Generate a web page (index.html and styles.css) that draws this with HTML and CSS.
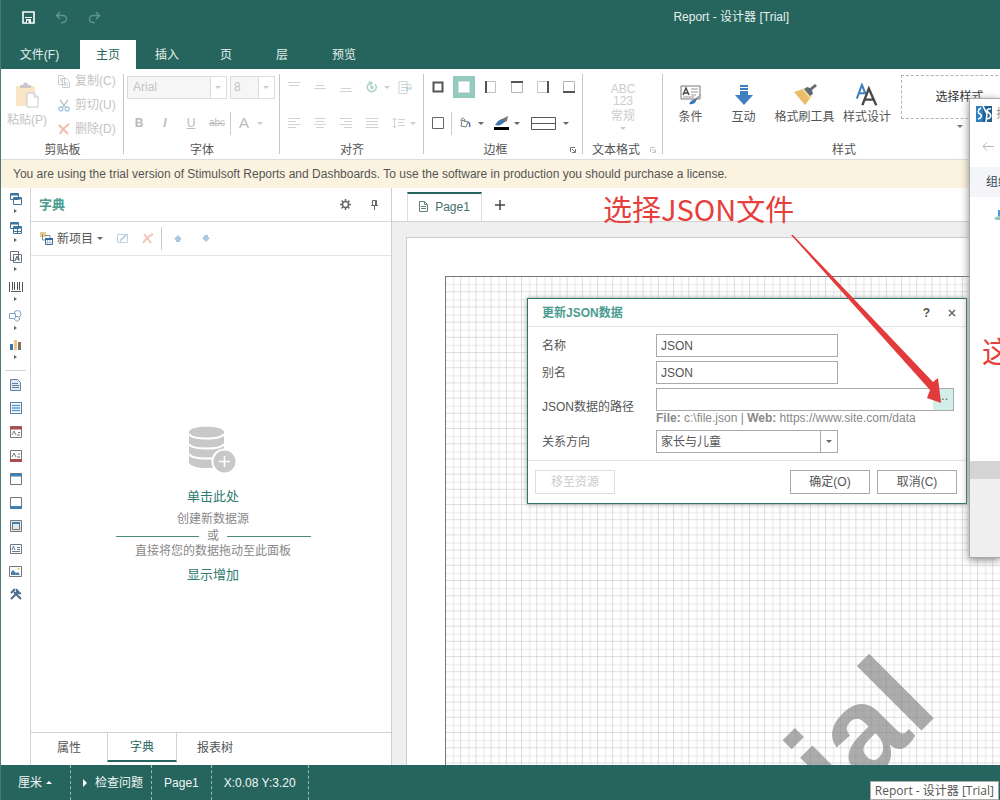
FILE: index.html
```html
<!DOCTYPE html>
<html lang="zh-CN">
<head>
<meta charset="utf-8">
<title>Report - 设计器 [Trial]</title>
<link rel="stylesheet" href="styles.css">
</head>
<body>
<div class="app">
  <header class="titlebar">
    <div class="quick">
      <button aria-label="保存"><svg width="13" height="13" viewBox="0 0 13 13"><path d="M1 1h11v11H1z" fill="none" stroke="#fff" stroke-width="1.6"/><path d="M3 6h7v1H3zM4 8h5v4H4z" fill="#fff"/><path d="M5 9.500h1.500V12H5z" fill="#25655d"/></svg></button>
      <button aria-label="撤销"><svg width="13" height="13" viewBox="0 0 13 13" fill="none" stroke="#5f938c" stroke-width="1.500"><path d="M5 1L1.500 4.500 5 8M2 4.500h6a3.500 3.500 0 0 1 0 7H6"/></svg></button>
      <button aria-label="重做"><svg width="13" height="13" viewBox="0 0 13 13" fill="none" stroke="#5f938c" stroke-width="1.500"><path d="M8 1l3.500 3.500L8 8M11 4.500H5a3.500 3.500 0 0 0 0 7h2"/></svg></button>
    </div>
    <h1 class="title">Report - 设计器 [Trial]</h1>
  </header>
  <nav class="tabs">
    <button class="tab tab-file">文件(F)</button>
    <button class="tab tab-active">主页</button>
    <button class="tab tab-mid">插入</button>
    <button class="tab">页</button>
    <button class="tab">层</button>
    <button class="tab tab-wide">预览</button>
  </nav>

  <section class="ribbon">
    <div class="group g-clip">
      <div class="group-body clip">
        <button class="paste" disabled>
          <svg width="24" height="26" viewBox="0 0 24 26"><path d="M1 4h19v20H1z" fill="#f8e6c6"/><path d="M5 3h3a2.500 2.500 0 0 1 5 0h3v3H5z" fill="#c9c9c9"/><path d="M12 11h7l4 4v10H12z" fill="#fff" stroke="#c8c8c8"/><path d="M19 11v4h4" fill="none" stroke="#c8c8c8"/></svg>
          粘贴(P)</button>
        <div class="clip-list">
          <button disabled><svg width="12" height="13" viewBox="0 0 12 13" fill="#fff" stroke="#c4ccd0"><path d="M.5 .5h4l2 2v7h-6zM4.500 3.500h4l3 3v6h-7z"/><path d="M6 8h4M6 10h4M2 4h2M2 6h2"/></svg>复制(C)</button>
          <button disabled><svg width="12" height="13" viewBox="0 0 12 13" fill="none"><path d="M2 1l6 8M10 1L4 9" stroke="#bcc4c8" stroke-width="1.300"/><circle cx="2.800" cy="10" r="2" stroke="#a5c8e4" stroke-width="1.300"/><circle cx="9.200" cy="10" r="2" stroke="#a5c8e4" stroke-width="1.300"/></svg>剪切(U)</button>
          <button disabled><svg width="12" height="12" viewBox="0 0 12 12" fill="none" stroke="#f5b9b0" stroke-width="2"><path d="M1 2l9 9M11 1C7 4 4 7 2 11"/></svg>删除(D)</button>
        </div>
      </div>
      <div class="group-label">剪贴板</div>
    </div>

    <div class="group g-font">
      <div class="group-body">
        <div class="row">
          <div class="combo combo-font"><input aria-label="字体" value="Arial" disabled><i class="caret"></i></div>
          <div class="combo combo-size"><input aria-label="字号" value="8" disabled><i class="caret"></i></div>
        </div>
        <div class="row faint">
          <button class="cell" disabled><b>B</b></button>
          <button class="cell" disabled><b><i>I</i></b></button>
          <button class="cell" disabled><u>U</u></button>
          <button class="cell tiny" disabled><s>abc</s></button>
          <span class="vline"></span>
          <button class="cell letter" disabled>A</button><i class="caret"></i>
        </div>
      </div>
      <div class="group-label">字体</div>
    </div>

    <div class="group g-align">
      <div class="group-body">
        <div class="row">
          <button class="cell" aria-label="顶端" disabled><svg width="12" height="12" stroke="#d2d2d2"><path d="M0 1.500h12M1 4.500h10"/></svg></button>
          <button class="cell" aria-label="居中" disabled><svg width="12" height="12" stroke="#d2d2d2"><path d="M2 4.500h8M0 7.500h12"/></svg></button>
          <button class="cell" aria-label="底端" disabled><svg width="12" height="12" stroke="#d2d2d2"><path d="M1 7.500h10M0 10.500h12"/></svg></button>
          <button class="cell" aria-label="旋转" disabled><svg width="12" height="12" viewBox="0 0 12 12" fill="none" stroke="#a9d3cc" stroke-width="1.500"><path d="M4 2a4.500 4.500 0 1 0 5 1M3 .5l3 1.500-2 3"/><circle cx="6" cy="6.500" r="1"/></svg></button><i class="caret near"></i>
          <button class="cell" aria-label="换行" disabled><svg width="14" height="13" viewBox="0 0 14 13" fill="none" stroke="#cfd4d4"><path d="M1 .5h8v12H1zM3 3.500h10M3 6.500h8M3 9.500h4"/><path d="M13 5v3H8M10 6L8 8l2 2" stroke="#a9c9dc"/></svg></button>
        </div>
        <div class="row">
          <button class="cell" aria-label="左对齐" disabled><svg width="12" height="12" stroke="#d2d2d2"><path d="M0 1.500h12M0 4.500h8M0 7.500h12M0 10.500h8"/></svg></button>
          <button class="cell" aria-label="居中对齐" disabled><svg width="12" height="12" stroke="#d2d2d2"><path d="M0 1.500h12M2 4.500h8M0 7.500h12M2 10.500h8"/></svg></button>
          <button class="cell" aria-label="右对齐" disabled><svg width="12" height="12" stroke="#d2d2d2"><path d="M0 1.500h12M4 4.500h8M0 7.500h12M4 10.500h8"/></svg></button>
          <button class="cell" aria-label="两端对齐" disabled><svg width="12" height="12" stroke="#d2d2d2"><path d="M0 1.500h12M0 4.500h12M0 7.500h12M0 10.500h12"/></svg></button>
          <button class="cell" aria-label="行距" disabled><svg width="13" height="12" fill="none" stroke="#cfd4d4"><path d="M2.500 1v10M.5 3l2-2 2 2M.5 9l2 2 2-2M6 2.500h7M6 5.500h6M6 8.500h7"/></svg></button><i class="caret near"></i>
        </div>
      </div>
      <div class="group-label">对齐</div>
    </div>

    <div class="group g-border">
      <div class="group-body">
        <div class="row">
          <button class="cell" aria-label="全部"><svg width="12" height="12"><path d="M1.500 1.500h9v9h-9z" fill="none" stroke="#555" stroke-width="2"/></svg></button>
          <button class="cell selected" aria-label="无"><svg width="12" height="12"><path d="M.5 .5h11v11h-11z" fill="#fff" stroke="#d5dfdc"/></svg></button>
          <button class="cell" aria-label="左"><svg width="12" height="12"><path d="M.5 .5h10v11H.5z" fill="none" stroke="#c4c4c4"/><path d="M1 0v12" stroke="#555" stroke-width="2"/></svg></button>
          <button class="cell" aria-label="上"><svg width="12" height="12"><path d="M.5 .5h11v11H.5z" fill="none" stroke="#b4b4b4"/><path d="M0 1h12" stroke="#555" stroke-width="2"/></svg></button>
          <button class="cell" aria-label="右"><svg width="12" height="12"><path d="M.5 .5h11v11H.5z" fill="none" stroke="#c4c4c4"/><path d="M11 0v12" stroke="#555" stroke-width="2"/></svg></button>
          <button class="cell" aria-label="下"><svg width="12" height="12"><path d="M.5 .5h11v11H.5z" fill="none" stroke="#b4b4b4"/><path d="M0 11h12" stroke="#555" stroke-width="2"/></svg></button>
        </div>
        <div class="row dark">
          <button class="cell" aria-label="外框"><svg width="12" height="12"><path d="M.5 .5h11v11h-11z" fill="none" stroke="#666"/></svg></button>
          <span class="vline"></span>
          <button class="cell" aria-label="填充"><svg width="13" height="12" viewBox="0 0 13 12" fill="none" stroke="#777"><path d="M3 3l6 2-2 5-5-1zM2 4c0-4 4-4 4 1"/><path d="M9 5c2 1 2 3 1.500 5" stroke="#4b7ba6" stroke-width="1.500"/></svg></button><i class="caret near"></i>
          <button class="cell" aria-label="边框颜色"><svg width="15" height="14" viewBox="0 0 15 14"><path d="M14 0L6 4l3 3 4-2z" fill="#777"/><path d="M8 3L4 5 1 9c4 1 7 0 9-3z" fill="#3d77ac"/><path d="M0 11h15v3H0z" fill="#000"/></svg></button><i class="caret near"></i>
          <button class="cell line-style" aria-label="线型"><svg width="25" height="13" fill="none" stroke="#555"><path d="M.5 .5h24v12H.5zM0 6.500h25"/></svg></button><i class="caret"></i>
        </div>
      </div>
      <div class="group-label label-border">边框<svg class="launch" width="6" height="6" fill="none" stroke="#777"><path d="M.5 5V.5H5M2 2l3 3M5.500 2v3.500H2"/></svg></div>
    </div>

    <div class="group g-text">
      <div class="group-body format">
        <button disabled><span>ABC</span><span>123</span><em>常规</em><i class="caret"></i></button>
      </div>
      <div class="group-label label-format">文本格式<svg class="launch pale" width="6" height="6" fill="none" stroke="#777"><path d="M.5 5V.5H5M2 2l3 3M5.500 2v3.500H2"/></svg></div>
    </div>

    <div class="group g-style">
      <div class="group-body styles">
        <button class="big"><svg width="24" height="24" viewBox="0 0 24 24" fill="none"><path d="M2 3h19v13H2z" fill="#fff" stroke="#777"/><path d="M4 12L7 5l3 7M5 10h4" stroke="#444" stroke-width="1.400"/><path d="M12 6h7M12 9h7M12 12h5M4 14h11" stroke="#999"/><path d="M22 11l-7 6 1.500 1.500z" fill="#777"/><path d="M16 16l-4 2-2 3c4 1 6-1 7-3z" fill="#3b79b8"/></svg>条件</button>
        <button class="big"><svg width="24" height="24" viewBox="0 0 24 24" fill="#3f7fbd"><path d="M8 2h8v2H8zM8 5h8v2H8zM8 8h8v4h5l-9 10-9-10h5z"/></svg>互动</button>
        <button class="big"><svg width="24" height="24" viewBox="0 0 24 24"><path d="M1 9l9-3 8 8-6 8z" fill="#e9bc69"/><path d="M10 5l9 9-2 2L9 7z" fill="#f3d79c"/><path d="M11 6l3-2 3 1 5-4 2 2-5 4 1 4-3 2z" fill="#626b73"/></svg>格式刷工具</button>
        <button class="big"><svg width="24" height="24" viewBox="0 0 24 26" fill="none"><path d="M1 17L6.500 2l4 10M3 11h6" stroke="#3f7fbd" stroke-width="2.200"/><path d="M7 24l7-18 8 18M9 18h10" stroke="#484848" stroke-width="2.600"/></svg>样式设计</button>
        <div class="picker"><button class="style-box">选择样式</button><i class="caret"></i></div>
      </div>
      <div class="group-label">样式</div>
    </div>
  </section>

  <div class="notice">You are using the trial version of Stimulsoft Reports and Dashboards. To use the software in production you should purchase a license.</div>

  <main class="main">
    <aside class="toolbox">
      <div class="tools-top">
        <button aria-label="带区"><svg width="12" height="12" viewBox="0 0 12 12" fill="#fff" stroke="#3f749c"><path d="M.5 .5h8v6h-8zM3.500 4.500h8v7h-8z"/><path d="M1 1.500h7M4 5.500h7" stroke-width="2"/></svg><i class="side"></i></button>
        <button aria-label="交叉带区"><svg width="12" height="12" viewBox="0 0 12 12" fill="#fff" stroke="#3f749c"><path d="M.5 .5h8v6h-8zM3.500 4.500h8v7h-8z"/><path d="M1 1.500h7M4 5.500h7" stroke-width="2"/><path d="M7.500 6v6M4 9.500h7"/></svg><i class="side"></i></button>
        <button aria-label="组件"><svg width="12" height="12" viewBox="0 0 12 12" fill="#fff" stroke="#657383"><path d="M.5 .5h8v9h-8zM3.500 3.500h8v8h-8z"/><path d="M5 10l2-5 2 5M5 8h5"/></svg><i class="side"></i></button>
        <button aria-label="条形码"><svg width="14" height="12" viewBox="0 0 14 12" stroke="#555"><path d="M.5 1v10M3.500 1v8M5.500 1v8M8.500 1v8M10.500 1v8M13.500 1v10M2 10.500h10"/></svg><i class="side"></i></button>
        <button aria-label="形状"><svg width="13" height="12" viewBox="0 0 13 12" fill="#fff" stroke="#7ba3cb"><circle cx="8.500" cy="4" r="3.500"/><path d="M.5 3.500h6v5h-6z"/><path d="M8 6l3 3-3 2.500L5 9z"/></svg><i class="side"></i></button>
        <button aria-label="图表"><svg width="12" height="12" viewBox="0 0 12 12"><path d="M0 5h3v6H0z" fill="#3975a9"/><path d="M4 1h3v10H4z" fill="#e7c58c"/><path d="M8 3h3v8H8z" fill="#807063"/></svg><i class="side"></i></button>
      </div>
      <div class="tools-list">
        <button aria-label="文本"><svg width="11" height="12" viewBox="0 0 11 12" fill="#dce8f3" stroke="#64809d"><path d="M.5 .5h7l3 3v8H.5z"/><path d="M2 4.500h6M2 6.500h7M2 8.500h7"/></svg></button>
        <button aria-label="数据带"><svg width="12" height="12" fill="#fff" stroke="#537ca3"><path d="M.5 .5h11v11H.5z"/><path d="M2 3.500h8M2 6h8M2 8.500h8" stroke="#629bd0" stroke-width="1.500"/></svg></button>
        <button aria-label="页头"><svg width="12" height="12" fill="#fff" stroke="#777"><path d="M.5 .5h11v11H.5z"/><path d="M0 2h12" stroke="#a64f4d" stroke-width="3"/><path d="M2 9l2-4 2 4M8 6.500h2M7 9h3"/></svg></button>
        <button aria-label="页脚"><svg width="12" height="12" fill="#fff" stroke="#777"><path d="M.5 .5h11v11H.5z"/><path d="M0 10.500h12" stroke="#a64f4d" stroke-width="3"/><path d="M2 7l2-4 2 4M8 4h2M7 7h3"/></svg></button>
        <button aria-label="标题"><svg width="12" height="12" fill="#fff" stroke="#777"><path d="M.5 .5h11v11H.5z"/><path d="M0 2h12" stroke="#427eb0" stroke-width="3"/></svg></button>
        <button aria-label="汇总"><svg width="12" height="12" fill="#fff" stroke="#777"><path d="M.5 .5h11v11H.5z"/><path d="M0 10.500h12" stroke="#427eb0" stroke-width="3"/></svg></button>
        <button aria-label="面板"><svg width="12" height="12" fill="#dfe8ee" stroke="#777"><path d="M.5 .5h11v11H.5zM2.500 3.500h7v6h-7z"/><path d="M2 3h8" stroke="#427eb0" stroke-width="2"/></svg></button>
        <button aria-label="富文本"><svg width="12" height="10" fill="#fff" stroke="#667a90"><path d="M.5 .5h11v9H.5z"/><path d="M2 6l1.500-4L5 6M7 3.500h3M7 5.500h3M2 7.500h8"/></svg></button>
        <button aria-label="图像"><svg width="13" height="11" fill="#fff" stroke="#777"><path d="M.5 .5h12v10H.5z"/><path d="M2 9V6l2-2 3 3 2-1 2 3z" fill="#4c81ad" stroke="none"/><circle cx="9.500" cy="3" r="1" fill="#e6bb65" stroke="none"/></svg></button>
        <button aria-label="设置"><svg width="12" height="12" viewBox="0 0 12 12" fill="none" stroke="#4d6c8b"><path d="M1 11l8-8M4 4l7 7" stroke-width="2"/><path d="M1 5l4-4M7 1c-1 3 1 5 4 4" stroke-width="2"/></svg></button>
      </div>
    </aside>

    <section class="dictionary">
      <header class="dict-head"><h2>字典</h2>
        <button aria-label="设置"><svg width="11" height="11" viewBox="0 0 11 11" fill="none" stroke="#666"><circle cx="5.500" cy="5.500" r="3" stroke-width="1.500"/><path d="M5.500 0v2M5.500 9v2M0 5.500h2M9 5.500h2M1.600 1.600L3 3M8 8l1.400 1.400M1.600 9.400L3 8M8 3l1.400-1.400" stroke-width="1.500"/></svg></button>
        <button aria-label="固定"><svg width="7" height="10" viewBox="0 0 7 10" fill="none" stroke="#666"><path d="M1.500 5V.5h4V5M0 5.500h7M3.500 6v4M4.500 1v4"/></svg></button>
      </header>
      <div class="dict-tools">
        <button class="new-item"><svg width="13" height="13" viewBox="0 0 13 13"><path d="M0 0h6v5H0z" fill="#edcb8d"/><path d="M2.500 2v6H5M5 3.500h5v4" fill="none" stroke="#7c8a96"/><path d="M5.500 6.500h7v6h-7z" fill="#fff" stroke="#426f95"/><path d="M5 7h8" stroke="#356b9b" stroke-width="2"/><path d="M7.500 8v4M10 8v4M6 10.500h6" stroke="#b3c8da"/></svg>新项目<i class="caret dark"></i></button>
        <button aria-label="编辑" disabled><svg width="11" height="11" fill="none" stroke="#bed2e1"><path d="M.5 1.500h10v8H.5z"/><path d="M3 8l7-7" stroke-width="2"/></svg></button>
        <button aria-label="删除" disabled><svg width="12" height="11" fill="none" stroke="#f2c5bb" stroke-width="2"><path d="M2 1l7 9M11 1C7 3 3 7 1 10"/></svg></button>
        <span class="vline"></span>
        <button aria-label="上移" disabled><svg width="8" height="8" fill="#aac8df"><path d="M4 0l4 4-2 1v2H2V5L0 4z"/></svg></button>
        <button aria-label="下移" disabled><svg width="8" height="8" fill="#aac8df"><path d="M4 7L0 3l2-1V0h4v2l2 1z"/></svg></button>
      </div>
      <div class="empty">
        <svg width="48" height="48" viewBox="0 0 48 48" fill="#c8c8c8"><path d="M0 6C0-1 35-1 35 6v30c0 8-35 8-35 0z"/><path d="M0 8c3 6 32 6 35 0M0 18c3 6 32 6 35 0M0 28c3 6 32 6 35 0" fill="none" stroke="#fff" stroke-width="2"/><circle cx="35.500" cy="35.500" r="12" stroke="#fff" stroke-width="2"/><path d="M35.500 30v11M30 35.500h11" stroke="#fff" stroke-width="1.500"/></svg>
        <a href="#new">单击此处</a>
        <p>创建新数据源</p>
        <p class="or">或</p>
        <p>直接将您的数据拖动至此面板</p>
        <a class="show" href="#show">显示增加</a>
      </div>
      <nav class="dict-tabs"><button>属性</button><button class="on">字典</button><button>报表树</button></nav>
    </section>

    <section class="designer">
      <nav class="page-tabs">
        <button class="page-tab"><svg width="9" height="11" fill="none" stroke="#66827e"><path d="M.5 .5h5l3 3v7h-8zM5.500 .5v3h3M2 5.500h5M2 7.500h5"/></svg>Page1</button>
        <button class="add" aria-label="新页"><svg width="10" height="10" stroke="#444" stroke-width="1.500"><path d="M5 0v10M0 5h10"/></svg></button>
      </nav>
      <div class="canvas"><div class="page">
        <svg class="sheet" width="100%" height="100%">
          <defs><pattern id="grid" width="15.200" height="15.200" patternUnits="userSpaceOnUse"><path d="M7.600 0v15.200M0 7.600h15.200" stroke="#e6e6e6"/><path d="M15.200 0v15.200M0 15.200h15.200" stroke="#bdbdbd"/></pattern></defs>
          <rect width="100%" height="100%" fill="url(#grid)"/>
          <text class="watermark" text-anchor="end" transform="translate(494 435) rotate(-45)">Trial</text>
        </svg>
      </div></div>
    </section>
  </main>

  <footer class="status">
    <button>厘米<i class="up"></i></button>
    <button><i class="play"></i>检查问题</button>
    <span>Page1</span>
    <span>X:0.08 Y:3.20</span>
  </footer>

  <form class="dialog" role="dialog" aria-labelledby="dlg-title">
    <header><h2 id="dlg-title">更新JSON数据</h2><button type="button">?</button><button type="button" aria-label="关闭"><svg width="8" height="8" stroke="#666" stroke-width="1.500"><path d="M1 1l6 6M7 1L1 7"/></svg></button></header>
    <div class="fields">
      <label for="name">名称</label><input id="name" class="short" value="JSON">
      <label for="alias">别名</label><input id="alias" class="short" value="JSON">
      <label for="path">JSON数据的路径</label>
      <div class="path"><div class="path-box"><input id="path"><button type="button">...</button></div><small><b>File:</b> c:\file.json | <b>Web:</b> https://www.site.com/data</small></div>
      <label for="relation">关系方向</label>
      <div class="select short"><select id="relation"><option>家长与儿童</option></select><span><i class="caret"></i></span></div>
    </div>
    <footer><button type="button" disabled>移至资源</button><button type="button" class="ok">确定(O)</button><button type="button">取消(C)</button></footer>
  </form>

  <svg class="arrow" width="152" height="170" viewBox="0 0 152 170"><path d="M0 0L2 0L142 147l5-4 3 25-14-5 3-8z" fill="#e33b3b"/></svg>
  <div class="note">选择JSON文件</div>

  <aside class="window">
    <div class="win-title"><svg width="16" height="16" viewBox="0 0 16 16"><path d="M0 0h7v16H0z" fill="#2d80c2"/><path d="M7 0h9v16H7z" fill="#1f5f92"/><path d="M5 2C1 4 2 7 4 8s2 4-2 5M7 0l4 8-1 8M15 3c-4-1-5 2-2 4s2 6-3 6" fill="none" stroke="#fff" stroke-width="1.600"/></svg><span>打开</span></div>
    <div class="win-nav"><svg width="12" height="9" fill="none" stroke="#b5b5b5"><path d="M12 4.500H1M5 .5l-4 4 4 4"/></svg></div>
    <div class="win-bar">组织</div>
    <div class="win-body"><svg width="10" height="14"><path d="M4 1h6v6H4z" fill="#4c9bdd"/><path d="M0 9l5-2 5 1v3H2z" fill="#8bc7c3"/></svg><b>这</b></div>
    <div class="win-scroll"></div>
    <div class="win-foot"></div>
  </aside>
  <div class="tooltip">Report - 设计器 [Trial]</div>
</div>
</body>
</html>
```
FILE: styles.css
```css
* { box-sizing: border-box; }
body { margin: 0; font: 12px/16px "Liberation Sans", "Noto Sans CJK SC", sans-serif; color: #555; }
button { border: 0; background: none; padding: 0; margin: 0; font: inherit; color: inherit; display: flex; align-items: center; justify-content: center; }
h1, h2, p { margin: 0; font: inherit; }
svg { display: block; flex: none; }
i.caret { flex: none; width: 0; height: 0; border: 3px solid transparent; border-top-color: #ccc; border-bottom: 0; }
.vline { width: 1px; height: 23px; background: #ccc; flex: none; }

.app { position: relative; height: 100vh; display: flex; flex-direction: column; overflow: hidden; background: #fff; border-left: 1px solid #4d7a78; }
.titlebar { flex: none; height: 40px; background: #25655d; display: flex; align-items: center; padding: 0 211px 6px 21px; }
.quick { display: flex; gap: 20px; flex: 1; }
.title { color: #e8f0ee; }
.tabs { flex: none; background: #25655d; height: 29px; display: flex; color: #e8f0ee; }
.tab { width: 56px; }
.tab-file { width: 79px; padding-right: 2px; }
.tab-active { background: #fff; color: #25655d; }
.tab-mid { width: 62px; }
.tab-wide { width: 68px; }

.ribbon { flex: none; height: 90px; display: flex; overflow: hidden; }
.group { flex: none; display: flex; flex-direction: column; position: relative; }
.group::after { content: ""; position: absolute; right: 0; top: 5px; bottom: 5px; width: 1px; background: #c6c6c6; }
.group-body { height: 72px; }
.group-label { height: 18px; line-height: 18px; text-align: center; position: relative; }
.launch { position: absolute; right: 7px; top: 6px; }
.pale { opacity: .4; }
.g-clip { width: 123px; }
.g-font { width: 156px; }
.g-align { width: 144px; }
.g-border { width: 159px; }
.label-border { padding-right: 16px; }
.g-text { width: 80px; }
.label-format { padding-right: 14px; }
.g-style { width: 362px; }
.clip { display: flex; color: #c3c3c3; }
.clip button { color: #c3c3c3; }
.paste { width: 52px; flex-direction: column; gap: 4px; }
.clip-list { display: flex; flex-direction: column; padding-left: 5px; }
.clip-list button { height: 24px; gap: 5px; }
.row { display: flex; align-items: center; height: 36px; padding-left: 1px; }
.cell { width: 26px; height: 24px; flex: none; }
.g-font .row { padding-left: 2px; }
.faint .cell { color: #bbb; }
.tiny { font-size: 10px; }
.letter { font-size: 15px; }
.combo { display: flex; align-items: center; justify-content: space-between; border: 1px solid #ddd; height: 23px; padding-right: 5px; margin-left: 1px; }
.combo input { border: 0; border-right: 1px solid #ddd; background: #f6f6f6; color: #c3c3c3; font: inherit; height: 21px; padding: 0 5px; min-width: 0; }
.combo-font { width: 100px; }
.combo-font input { width: 83px; }
.combo-size { width: 45px; margin-left: 3px; }
.combo-size input { width: 28px; padding: 0 3px; }
.near { margin: 0 2px 0 -1px; }
.selected { background: #95cabf; width: 22px; margin: 0 3px 0 2px; height: 22px; }
.dark .caret, i.dark { border-top-color: #666; }
.dark .near { margin: 0 4px 0 0; }
.dark .line-style { width: 32px; margin-left: 3px; margin-right: 4px; }
.format { display: flex; justify-content: center; }
.format button { flex-direction: column; color: #ccc; line-height: 12px; padding-top: 2px; }
.format em { font-style: normal; line-height: 16px; padding: 1px 0 3px; }
.styles { display: flex; padding-left: 1px; }
.big { flex-direction: column; width: 53px; gap: 2px; white-space: nowrap; padding-bottom: 2px; }
.big:nth-child(3) { width: 69px; }
.big:nth-child(4) { width: 56px; }
.picker { display: flex; flex-direction: column; align-items: center; padding-top: 6px; gap: 6px; margin-left: 6px; }
.style-box { width: 117px; height: 44px; border: 1px dashed #b5b5b5; color: #333; }
.picker .caret { border-top-color: #777; }
.notice { flex: none; height: 29px; line-height: 29px; padding-left: 12px; background: #fbf3df; border-top: 1px solid #ddd; white-space: nowrap; }

.main { flex: 1; min-height: 0; display: flex; }
.toolbox { flex: none; width: 30px; border-right: 1px solid #d2d2d2; }
.toolbox button { width: 100%; }
.tools-top { height: 183px; padding-bottom: 6px; border-bottom: 1px solid #d2d2d2; display: flex; flex-direction: column; justify-content: space-around; margin: 0 4px; }
.tools-top button { flex-direction: column; gap: 4px; }
.side { width: 0; height: 0; border: 2px solid transparent; border-left: 3px solid #666; border-right: 0; }
.tools-list { height: 235px; padding-top: 2px; display: flex; flex-direction: column; justify-content: space-around; }

.dictionary { flex: none; width: 361px; border-right: 1px solid #cfcfcf; display: flex; flex-direction: column; }
.dict-head { height: 34px; flex: none; border-bottom: 1px solid #d8d8d8; display: flex; align-items: center; gap: 20px; padding: 0 13px 0 8px; }
.dict-head h2 { flex: 1; font-weight: bold; font-size: 13px; color: #4a9c8f; }
.dict-tools { height: 34px; flex: none; border-bottom: 1px solid #e4e4e4; display: flex; align-items: center; padding-left: 9px; gap: 14px; }
.new-item { gap: 4px; }
.dict-tools .vline { margin: 0 -7px; }
.dict-tools .vline + button { margin: 0 6px 0 5px; }
.empty { flex: 1; display: flex; flex-direction: column; align-items: center; padding-top: 170px; padding-left: 4px; color: #888; }
.empty a { color: #2f7a6d; font-size: 13px; line-height: 18px; text-decoration: none; margin-top: 14px; }
.empty p { line-height: 15px; }
.empty a + p { margin-top: 6px; }
.empty .or { display: flex; align-items: center; gap: 8px; width: 195px; line-height: 17px; margin-top: 1px; }
.or::before, .or::after { content: ""; flex: 1; height: 1px; background: #4b8c81; }
.empty p.or + p { margin-top: -1px; }
.empty .show { margin-top: 7px; }
.dict-tabs { flex: none; height: 33px; border-top: 1px solid #d2d2d2; display: flex; }
.dict-tabs button { width: 76px; height: 29px; }
.dict-tabs .on { width: 70px; color: #25655d; border: 1px solid #d2d2d2; border-top: 0; border-bottom: 2px solid #25655d; }

.designer { flex: 1; min-width: 0; display: flex; flex-direction: column; }
.page-tabs { flex: none; height: 34px; border-bottom: 1px solid #d2d2d2; display: flex; padding: 4px 0 0 15px; }
.page-tab { width: 75px; gap: 7px; border: 1px solid #ddd; border-top: 2px solid #25655d; border-bottom: 0; color: #46716b; padding-bottom: 2px; }
.add { width: 36px; padding-bottom: 4px; }
.canvas { flex: 1; min-height: 0; background: #efefef; padding: 15px 0 0 14px; }
.page { height: 100%; background: #fff; border: 1px solid #ccc; border-width: 1px 0 0 1px; padding: 38px 0 0 38px; }
.sheet { border: 1px solid #777; border-width: 1px 0 0 1px; }
.watermark { font-family: "Liberation Sans", Arial, sans-serif; font-size: 126px; font-weight: bold; fill: #808080; fill-opacity: .65; }

.status { flex: none; height: 35px; background: #25655d; color: #f2f7f6; display: flex; }
.status > * { display: flex; align-items: center; gap: 6px; padding: 0 12px; border-right: 1px dashed #9bbcb7; }
.status > :first-child { padding: 0 18px 0 17px; gap: 4px; }
.status > :nth-child(2) { padding: 0 8px 0 12px; gap: 8px; }
.up { border: 3px solid transparent; border-bottom-color: #fff; border-top: 0; }
.play { border: 4px solid transparent; border-left-color: #fff; border-right: 0; }

.dialog { position: absolute; left: 526px; top: 298px; width: 440px; background: #fff; border: 1px solid #2c7568; box-shadow: 0 0 5px #999; }
.dialog > header { height: 28px; display: flex; align-items: center; gap: 18px; padding: 0 10px 0 14px; border-bottom: 1px solid #e2e2e2; }
.dialog h2 { flex: 1; font-weight: bold; font-size: 12px; color: #4a9c8f; }
.dialog header button { font-weight: bold; }
.fields { display: grid; grid-template-columns: 114px 1fr; row-gap: 4px; align-items: center; padding: 7px 12px 7px 14px; border-bottom: 1px solid #e2e2e2; }
.fields input, .fields select { font: inherit; color: #555; background: #fff; height: 23px; border: 1px solid #aaa; border-radius: 0; padding: 0 4px; outline: 0; }
.short { width: 182px; }
.path-box { display: flex; border: 1px solid #aaa; height: 23px; }
.fields .path-box input { flex: 1; border: 0; height: 21px; min-width: 0; }
.path-box button { width: 20px; background: #d2eee8; padding-bottom: 7px; }
.path small { display: block; font-size: 12px; line-height: 15px; color: #888; }
.select { position: relative; display: flex; }
.fields select { appearance: none; width: 100%; }
.select span { position: absolute; right: 0; top: 0; bottom: 0; width: 18px; border: 1px solid #aaa; display: flex; align-items: center; justify-content: center; pointer-events: none; }
.select .caret { border-top-color: #666; }
.dialog > footer { display: flex; gap: 7px; padding: 9px 9px 9px 7px; }
.dialog > footer button { width: 80px; height: 24px; border: 1px solid #aaa; }
.dialog > footer button:disabled { border-color: #ddd; color: #ccc; }
.dialog > footer .ok { margin-left: auto; }

.arrow { position: absolute; left: 790px; top: 235px; }
.note { position: absolute; left: 602px; top: 189px; font: 29px/38px "Noto Sans CJK SC", sans-serif; color: #e5403c; white-space: nowrap; }
.window { position: absolute; right: 0; top: 98px; width: 31px; height: 460px; background: #fff; border: 1px solid #aaa; border-right: 0; box-shadow: 0 2px 8px #888; overflow: hidden; display: flex; flex-direction: column; white-space: nowrap; }
.win-title { height: 29px; display: flex; align-items: center; gap: 4px; padding-left: 6px; color: #999; }
.win-nav { height: 39px; padding: 14px 12px; }
.win-bar { height: 30px; line-height: 30px; padding-left: 16px; background: #f3f5f8; color: #345; }
.win-body { flex: 1; padding: 12px 0 0 24px; }
.win-body b { display: block; margin: 108px 0 0 -12px; font: 29px/38px "Noto Sans CJK SC", sans-serif; color: #e5403c; }
.win-scroll { height: 18px; background: #d4d4d4; }
.win-foot { height: 78px; background: #efefef; }
.tooltip { position: absolute; right: 1px; bottom: 0; height: 19px; line-height: 18px; padding: 0 4px; background: #fff; border: 1px solid #aaa; font-family: "Open Sans", "Noto Sans CJK SC", sans-serif; font-size: 12px; white-space: nowrap; }
```
